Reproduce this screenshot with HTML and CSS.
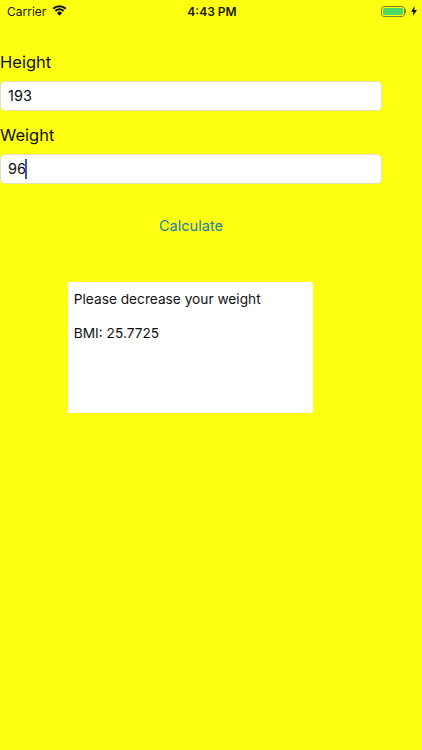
FILE: index.html
```html
<!DOCTYPE html>
<html lang="en">
<head>
<meta charset="utf-8">
<title>BMI Calculator</title>
<link rel="stylesheet" href="styles.css">
</head>
<body>
<div class="status">
  <div class="status-left">
    <span>Carrier</span>
    <svg class="wifi" width="15" height="11" viewBox="0 0 15 11"><path d="M1.200 3.800a9 9 0 0 1 12.600 0M3.400 6a5.900 5.900 0 0 1 8.200 0" fill="none" stroke="#111" stroke-width="2"/><path d="M4.900 7.900 7.500 10.700l2.600-2.800a3.700 3.700 0 0 0-5.200 0z" fill="#111"/></svg>
  </div>
  <div class="status-time">4:43 PM</div>
  <div class="status-right">
    <div class="battery"><div class="battery-fill"></div></div>
    <div class="battery-cap"></div>
    <svg class="bolt" width="6" height="10" viewBox="0 0 6 10"><path d="M3.600 0 0 5.700h2.300L1.900 10 6 3.900H3.400z" fill="#111"/></svg>
  </div>
</div>
<main class="form">
  <label class="label label-first" for="h">Height</label>
  <div class="field" id="h">193</div>
  <label class="label label-second" for="w">Weight</label>
  <div class="field" id="w">96<span class="caret"></span></div>
  <div class="action">Calculate</div>
  <div class="result">
    <p class="result-line">Please decrease your weight</p>
    <p class="result-line">BMI: 25.7725</p>
  </div>
</main>
</body>
</html>
```
FILE: styles.css
```css
* { box-sizing: border-box; }
html, body { margin: 0; height: 100%; }
body {
  width: 422px;
  height: 750px;
  overflow: hidden;
  background: #ffff12;
  color: #111;
  font-family: "Inter", "Liberation Sans", sans-serif;
}
.status {
  height: 22px;
  display: grid;
  grid-template-columns: 1fr auto 1fr;
  align-items: center;
  color: #1a1a00;
}
.status-left { display: flex; align-items: center; gap: 6px; padding-left: 7px; font-size: 12px; }
.wifi { margin-top: -2px; }
.status-time { font-weight: 600; font-size: 12px; padding-left: 2px; }
.status-right { display: flex; justify-content: flex-end; align-items: center; padding-right: 5px; }
.battery {
  width: 24px;
  height: 11px;
  border: 1px solid #6f8f2a;
  border-radius: 3px;
  padding: 1px;
}
.battery-fill { height: 100%; background: #4cd964; border-radius: 1.500px; }
.battery-cap { width: 1.500px; height: 4px; background: #6f8f2a; margin-right: 5px; }
.form { display: flex; flex-direction: column; }
.label { display: block; font-size: 16.500px; line-height: 21px; }
.label-first { margin-top: 30px; }
.label-second { margin-top: 14px; }
.field {
  width: 382px;
  height: 30px;
  margin-top: 8px;
  padding-left: 7px;
  background: #fff;
  border: 1px solid #e3e3b8;
  border-radius: 5px;
  font-size: 14.500px;
  line-height: 28px;
}
.caret {
  display: inline-block;
  width: 2px;
  height: 20px;
  margin-left: -1px;
  background: #3b50e0;
  vertical-align: -5px;
}
.action {
  width: 382px;
  margin-top: 32px;
  text-align: center;
  font-size: 14.600px;
  line-height: 20px;
  color: #1f7fa8;
}
.result {
  width: 245px;
  height: 130.500px;
  margin: 46px 0 0 68.300px;
  padding: 9px 5.500px;
  background: #fff;
}
.result-line { margin: 0 0 17px; font-size: 13.700px; line-height: 17px; }
```
